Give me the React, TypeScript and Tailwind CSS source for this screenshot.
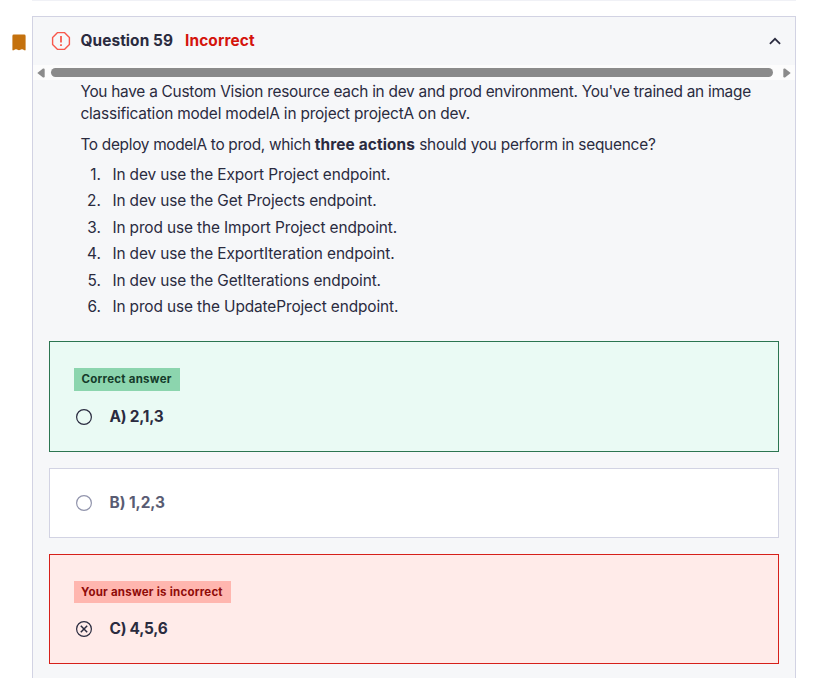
import React from "react";

const STEPS: string[] = [
  "In dev use the Export Project endpoint.",
  "In dev use the Get Projects endpoint.",
  "In prod use the Import Project endpoint.",
  "In dev use the ExportIteration endpoint.",
  "In dev use the GetIterations endpoint.",
  "In prod use the UpdateProject endpoint.",
];

function Radio({ className, crossed = false }: { className: string; crossed?: boolean }) {
  return (
    <svg className={`h-[18px] w-[18px] shrink-0 ${className}`} viewBox="0 0 18 18" fill="none" stroke="currentColor" strokeWidth="1.2">
      <circle cx="9" cy="9" r="7.4" />
      {crossed && <path d="M5.8 5.8l6.4 6.4M12.2 5.8l-6.4 6.4" strokeWidth="1.5" />}
    </svg>
  );
}

export default function App() {
  return (
    <div className="flex h-[678px] w-[820px] flex-col overflow-hidden bg-white font-['Inter','Liberation_Sans',sans-serif] text-[15.4px] text-[#2a2b3f]">
      <div className="ml-8 h-px w-[764px] shrink-0 bg-[#f0f1f6]" />
      <div className="mt-[15px] flex h-[662px] shrink-0">
        <div className="w-8 shrink-0 pl-3 pt-[18px]">
          <svg className="h-[17px] w-[14px]" viewBox="0 0 14 17" fill="#c4710d">
            <path d="M1.8 0.6h10.4q1.4 0 1.4 1.4V16.3h-1.5Q11 15 9.7 15.3L7 16.2 4.3 15.3Q3 15 1.9 16.3H.4V2Q.4.6 1.8.6z" />
          </svg>
        </div>
        <section className="flex w-[764px] shrink-0 flex-col border border-b-0 border-[#d2d3e3] bg-[#f6f7f9]">
          <header className="flex h-12 shrink-0 items-center pl-[18px] pr-[13px]">
            <svg className="h-5 w-5" viewBox="0 0 20 20" fill="none" stroke="#f8584c" strokeWidth="1.4">
              <path d="M6.6 1.6h6.8l5 5v6.8l-5 5H6.6l-5-5V6.6z" strokeLinejoin="round" />
              <path d="M10 5v6.4M10 13.2v1.8" strokeWidth="1.8" />
            </svg>
            <h2 className="ml-[9.5px] w-[104.5px] whitespace-nowrap font-bold tracking-[0.08px]">Question 59</h2>
            <span className="whitespace-nowrap font-bold tracking-[0.13px] text-[#d4140c]">Incorrect</span>
            <svg className="ml-auto h-[14px] w-[14px]" viewBox="0 0 14 14" fill="none" stroke="#2a2b3f" strokeWidth="1.7">
              <path d="M1.9 9.9L7 4.8l5.1 5.1" />
            </svg>
          </header>
          <div className="flex h-[15px] shrink-0 items-center bg-[#fcfcfc] pl-1 pr-1">
            <svg className="h-[10px] w-2" viewBox="0 0 8 10" fill="#8b8b8b"><path d="M0.3 5L6 .6Q7.7.2 7.7 1.8v6.4Q7.7 9.8 6 9.4z" /></svg>
            <div className="ml-[6px] h-[9px] w-[722px] rounded-full bg-[#8b8b8b]" />
            <svg className="ml-auto h-[10px] w-2" viewBox="0 0 8 10" fill="#8b8b8b"><path d="M7.7 5L2 .6Q.3.2.3 1.8v6.4Q.3 9.8 2 9.4z" /></svg>
          </div>
          <div className="flex h-[261px] shrink-0 flex-col whitespace-nowrap pl-[47.4px] pt-px leading-[22.4px]">
            <p>
              <span className="tracking-[-0.26px]">You have a Custom Vision resource each in dev and prod environment. You've trained an image</span>
              <br />
              <span className="tracking-[-0.18px]">classification model modelA in project projectA on dev.</span>
            </p>
            <p className="mt-2">
              <span className="tracking-[-0.3px]">To deploy modelA to prod, which </span>
              <strong className="tracking-[0.13px]">three actions</strong>
              <span className="tracking-[-0.22px]"> should you perform in sequence?</span>
            </p>
            <ol className="mt-[5.9px]">
              {STEPS.map((step, i) => (
                <li key={step} className="flex h-[26.4px] items-center">
                  <span className="w-[20.5px] text-right">{i + 1}.</span>
                  <span className="ml-[11.5px] tracking-[-0.11px]">{step}</span>
                </li>
              ))}
            </ol>
          </div>
          <div className="flex flex-col gap-4 pl-4">
            <article className="h-[111px] w-[730px] border border-[#2c7551] bg-[#eafaf4] pl-6 pt-[26px]">
              <div className="flex h-[23px] w-[106px] items-center whitespace-nowrap bg-[#8cd5ae] pl-[7.4px] text-[11.5px] font-bold tracking-[0.26px] text-[#153b2a]">Correct answer</div>
              <div className="mt-4 flex h-5 items-center pl-px font-bold">
                <Radio className="text-[#2a2b3f]" />
                <span className="ml-[16.5px] tracking-[-0.22px]">A) 2,1,3</span>
              </div>
            </article>
            <article className="flex h-[70px] w-[730px] items-center border border-[#d2d3e3] bg-white pl-[25px] font-bold text-[#595c73]">
              <Radio className="text-[#9194ac]" />
              <span className="ml-[16.5px] tracking-[-0.05px]">B) 1,2,3</span>
            </article>
            <article className="h-[110px] w-[730px] border border-[#d6201a] bg-[#ffebe9] pl-6 pt-[26px]">
              <div className="flex h-[22px] w-[157px] items-center whitespace-nowrap bg-[#ffb6af] pl-[7px] pt-px text-[11.5px] font-bold tracking-[0.23px] text-[#8f0b08]">Your answer is incorrect</div>
              <div className="mt-4 flex h-5 items-center pl-px font-bold">
                <Radio className="text-[#2a2b3f]" crossed />
                <span className="ml-[16.5px] tracking-[-0.25px]">C) 4,5,6</span>
              </div>
            </article>
          </div>
        </section>
      </div>
    </div>
  );
}
